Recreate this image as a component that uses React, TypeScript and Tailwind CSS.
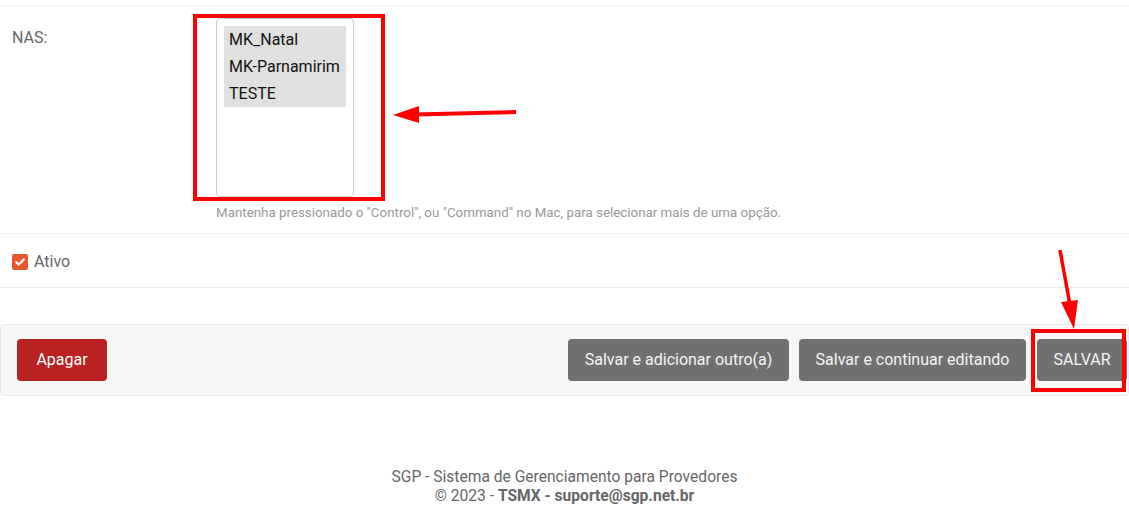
import React from "react";

export default function App() {
  return (
    <div className="relative w-[1129px] h-[518px] overflow-hidden bg-white font-['Roboto',sans-serif] text-[16px] text-[#666]">
      <div className="h-[5px]" />
      {/* NAS row */}
      <div className="flex h-[228px] border-t border-[#eee] px-3 pt-3">
        <div className="w-[204px] pt-[10px] leading-[20px]">NAS:</div>
        <div className="flex flex-col">
          <div className="h-[179px] w-[138px] rounded-[4px] border border-[#ccc] bg-white p-[7px]">
            <div className="bg-[#e0e0e0] text-[#111] leading-[27px]">
              <div className="pl-[5px] leading-[26px] pt-[1px]">MK_Natal</div>
              <div className="pl-[5px]">MK-Parnamirim</div>
              <div className="pl-[5px]">TESTE</div>
            </div>
          </div>
          <div className="mt-[8px] whitespace-nowrap text-[13.35px] leading-[15px] text-[#999]">
            Mantenha pressionado o "Control", ou "Command" no Mac, para selecionar mais de uma opção.
          </div>
        </div>
      </div>
      {/* Ativo row */}
      <div className="flex h-[55px] items-center gap-[6px] border-y border-[#eee] px-3 pt-[2px]">
        <div className="flex h-[16px] w-[16px] items-center justify-center rounded-[2px] bg-[#e9572b]">
          <svg width="12" height="12" viewBox="0 0 12 12">
            <path d="M2.3 6.2 L4.8 8.6 L9.8 3.4" fill="none" stroke="white" strokeWidth="2.2" strokeLinecap="round" strokeLinejoin="round" />
          </svg>
        </div>
        <span className="leading-[20px]">Ativo</span>
      </div>
      {/* Submit row */}
      <div className="mt-[36px] flex h-[72px] items-start justify-between rounded-[4px] border border-[#e8e8e8] bg-[#f7f7f7] pl-[16px] pr-[1px] pt-[14px]">
        <button className="h-[42px] w-[90px] rounded-[4px] bg-[#ba2121] text-[16px] text-white">Apagar</button>
        <div className="flex gap-[10px]">
          <button className="h-[42px] w-[221px] rounded-[4px] bg-[#707070] text-[16px] text-[#f5f5f5]">Salvar e adicionar outro(a)</button>
          <button className="h-[42px] w-[227px] rounded-[4px] bg-[#707070] text-[16px] text-[#f5f5f5]">Salvar e continuar editando</button>
          <button className="ml-[1px] h-[42px] w-[90px] rounded-[4px] bg-[#707070] text-[16px] text-[#f5f5f5]">SALVAR</button>
        </div>
      </div>
      {/* Footer */}
      <div className="mt-[72px] text-center text-[15.6px] leading-[19px] text-[#666]">
        <div>SGP - Sistema de Gerenciamento para Provedores</div>
        <div>
          © 2023 - <b className="font-bold">TSMX - suporte@sgp.net.br</b>
        </div>
      </div>

      {/* Annotations */}
      <div className="absolute left-[193px] top-[14px] h-[187px] w-[192px] border-[4px] border-[#ff0000]" />
      <div className="absolute left-[1031px] top-[329px] h-[63px] w-[95px] border-[4px] border-[#ff0000]" />
      <svg className="absolute left-0 top-0" width="1129" height="518" viewBox="0 0 1129 518">
        <line x1="516" y1="112" x2="414" y2="114.5" stroke="#ff0000" strokeWidth="4" />
        <polygon points="393,115 419,106 419,123" fill="#ff0000" />
        <line x1="1060" y1="250" x2="1070" y2="305" stroke="#ff0000" strokeWidth="3.5" />
        <polygon points="1074,329 1061,302 1078,300" fill="#ff0000" />
      </svg>
    </div>
  );
}
